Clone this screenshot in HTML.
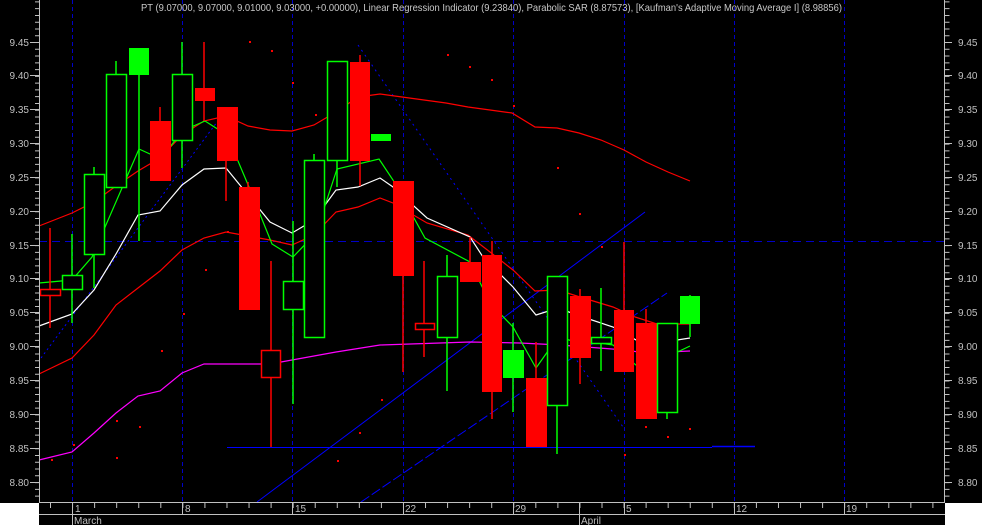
<!DOCTYPE html>
<html><head><meta charset="utf-8"><style>
html,body{margin:0;padding:0;background:#000;}
svg{display:block;font-family:"Liberation Sans",sans-serif;}
</style></head><body>
<svg width="982" height="525" viewBox="0 0 982 525" xmlns="http://www.w3.org/2000/svg">
<rect width="982" height="525" fill="#000"/>
<rect x="0" y="503" width="39" height="22" fill="#fff"/>
<rect x="945" y="503" width="37" height="22" fill="#fff"/>
<!-- grid dashed -->
<g stroke="#0000c8" stroke-width="1" stroke-dasharray="4 3">
<line x1="72.5" y1="0" x2="72.5" y2="502"/><line x1="182.5" y1="0" x2="182.5" y2="502"/>
<line x1="292.5" y1="0" x2="292.5" y2="502"/><line x1="403.5" y1="0" x2="403.5" y2="502"/>
<line x1="513.5" y1="0" x2="513.5" y2="502"/><line x1="624.5" y1="0" x2="624.5" y2="502"/>
<line x1="734.5" y1="0" x2="734.5" y2="502"/><line x1="844.5" y1="0" x2="844.5" y2="502"/>
<line x1="39" y1="241.5" x2="944" y2="241.5" stroke-dasharray="8 5"/>
</g>
<!-- title -->
<text x="141" y="11" fill="#c8c8c8" font-size="10.5" textLength="701" lengthAdjust="spacingAndGlyphs">PT (9.07000, 9.07000, 9.01000, 9.03000, +0.00000), Linear Regression Indicator (9.23840), Parabolic SAR (8.87573), [Kaufman's Adaptive Moving Average I] (8.98856)</text>
<!-- blue lines -->
<g stroke="#0000ff" stroke-width="1" fill="none">
<line x1="257" y1="502" x2="645" y2="212"/>
<line x1="361" y1="502" x2="667" y2="293" stroke-dasharray="10 3"/>
<line x1="358" y1="45" x2="623" y2="427" stroke-dasharray="2 4"/>
<line x1="41" y1="358" x2="226" y2="110" stroke-dasharray="2 3"/>
<line x1="227" y1="447.5" x2="712" y2="447.5"/>
<line x1="712" y1="446.5" x2="755" y2="446.5" stroke-width="1.5"/>
</g>
<!-- magenta -->
<polyline fill="none" stroke="#ff00ff" stroke-width="1.2" points="39,460 72,452 94,433 116,413 138,396 160,391 182,373 204,364 226,364 270,364 292,360 336,352 380,345 440,343 470,342 520,343 560,345 625,350 645,353 690,351"/>
<!-- red bands -->
<g fill="none" stroke="#ff0000" stroke-width="1.2">
<polyline points="39,226 72,213 94,202 116,186 138,171 160,158 182,135 204,121 226,116 248,126 270,130 292,131 314,125 336,112 358,97 380,94 402,97 424,100 446,103 468,107 490,110 512,113 535,127 557,128 579,133 601,140 624,150 646,162 668,172 690,181"/>
<polyline points="39,374 72,358 94,335 116,305 138,288 160,271 182,250 204,238 226,232 248,236 270,240 292,245 314,235 336,212 358,207 380,198 393,203 427,223 468,235 490,252 513,270 535,291 558,290 580,297 613,307 635,317 657,324 690,324"/>
</g>
<polyline fill="none" stroke="#ffffff" stroke-width="1.2" points="39,326 72,314 94,290 116,254 138,215 160,211 182,185 204,169 226,168 248,195 270,222 292,233 314,220 336,190 358,187 380,178 393,187 427,218 470,237 483,257 513,287 536,315 558,308 580,316 613,327 645,345 690,338"/>
<polyline fill="none" stroke="#00ff00" stroke-width="1.2" points="39,283 72,280 92,257 139,149 161,159 182,131 205,121 227,135 249,187 272,244 293,257 316,233 337,169 379,159 393,180 425,238 470,262 490,303 513,327 536,368 558,337 580,343 593,342 613,345 645,373 667,357 690,346"/>
<!-- candles -->
<g stroke-width="1.5">
<g stroke="#ff0000" fill="none">
<line x1="50" y1="228" x2="50" y2="328"/><rect x="40.5" y="289.5" width="20" height="6" fill="#000"/>
<line x1="160" y1="107" x2="160" y2="181"/><line x1="204" y1="42" x2="204" y2="121"/>
<line x1="226" y1="107" x2="226" y2="201"/><line x1="248" y1="182" x2="248" y2="310"/>
<line x1="271" y1="261" x2="271" y2="447"/><rect x="261.5" y="350.5" width="19" height="27" fill="#000"/>
<line x1="360" y1="55" x2="360" y2="186"/><line x1="403" y1="181" x2="403" y2="372"/>
<line x1="424" y1="261" x2="424" y2="357"/><rect x="415.5" y="323.5" width="19" height="6" fill="#000"/>
<line x1="470" y1="237" x2="470" y2="282"/><line x1="492" y1="241" x2="492" y2="419"/>
<line x1="536" y1="342" x2="536" y2="447"/><line x1="580" y1="289" x2="580" y2="384"/>
<line x1="624" y1="242" x2="624" y2="372"/><line x1="646" y1="309" x2="646" y2="419"/>
</g>
<g fill="#ff0000" stroke="none">
<rect x="150" y="121" width="21" height="60"/><rect x="195" y="88" width="20" height="13"/>
<rect x="217" y="107" width="21" height="54"/><rect x="239" y="187" width="21" height="123"/>
<rect x="350" y="62" width="20" height="99"/><rect x="393" y="181" width="21" height="95"/>
<rect x="460" y="262" width="21" height="20"/><rect x="482" y="255" width="20" height="137"/>
<rect x="526" y="378" width="21" height="69"/><rect x="570" y="296" width="21" height="62"/>
<rect x="614" y="310" width="20" height="62"/><rect x="636" y="323" width="21" height="96"/>
</g>
<g stroke="#00ff00" fill="none">
<line x1="72" y1="234" x2="72" y2="323"/><rect x="62.5" y="275.5" width="20" height="14" fill="#000"/>
<line x1="94" y1="167" x2="94" y2="288"/><rect x="84.5" y="174.5" width="20" height="80" fill="#000"/>
<line x1="116" y1="61" x2="116" y2="187"/><rect x="106.5" y="74.5" width="20" height="113" fill="#000"/>
<line x1="139" y1="48" x2="139" y2="241"/>
<line x1="182" y1="42" x2="182" y2="168"/><rect x="172.5" y="74.5" width="20" height="66" fill="#000"/>
<line x1="293" y1="221" x2="293" y2="404"/><rect x="283.5" y="281.5" width="20" height="28" fill="#000"/>
<line x1="314" y1="154" x2="314" y2="337"/><rect x="304.5" y="160.5" width="20" height="177" fill="#000"/>
<line x1="337" y1="61" x2="337" y2="187"/><rect x="327.5" y="61.5" width="20" height="99" fill="#000"/>
<line x1="447" y1="255" x2="447" y2="391"/><rect x="437.5" y="276.5" width="20" height="61" fill="#000"/>
<line x1="513" y1="323" x2="513" y2="412"/>
<line x1="557" y1="276" x2="557" y2="454"/><rect x="547.5" y="276.5" width="20" height="129" fill="#000"/>
<line x1="601" y1="288" x2="601" y2="371"/><rect x="591.5" y="337.5" width="20" height="6" fill="#000"/>
<line x1="667" y1="323" x2="667" y2="419"/><rect x="657.5" y="323.5" width="20" height="89" fill="#000"/>
<line x1="690" y1="295" x2="690" y2="337"/>
</g>
<g fill="#00ff00" stroke="none">
<rect x="129" y="48" width="20" height="27"/><rect x="371" y="134" width="20" height="7"/>
<rect x="503" y="350" width="21" height="28"/><rect x="680" y="296" width="20" height="28"/>
</g>
</g>
<!-- SAR dots -->
<g fill="#ff0000">
<rect x="51" y="459" width="2" height="2"/><rect x="73" y="444" width="2" height="2"/><rect x="116" y="420" width="2" height="2"/>
<rect x="116" y="457" width="2" height="2"/><rect x="139" y="426" width="2" height="2"/><rect x="161" y="350" width="2" height="2"/>
<rect x="183" y="313" width="2" height="2"/><rect x="205" y="269" width="2" height="2"/><rect x="227" y="231" width="2" height="2"/>
<rect x="249" y="41" width="2" height="2"/><rect x="271" y="50" width="2" height="2"/><rect x="292" y="82" width="2" height="2"/>
<rect x="315" y="114" width="2" height="2"/><rect x="337" y="460" width="2" height="2"/><rect x="381" y="399" width="2" height="2"/>
<rect x="359" y="432" width="2" height="2"/><rect x="447" y="54" width="2" height="2"/><rect x="469" y="66" width="2" height="2"/>
<rect x="491" y="79" width="2" height="2"/><rect x="513" y="105" width="2" height="2"/><rect x="557" y="167" width="2" height="2"/>
<rect x="579" y="213" width="2" height="2"/><rect x="601" y="246" width="2" height="2"/><rect x="645" y="426" width="2" height="2"/>
<rect x="667" y="436" width="2" height="2"/><rect x="689" y="428" width="2" height="2"/><rect x="624" y="454" width="2" height="2"/>
</g>
<!-- axes -->
<g stroke="#c0c0c0" stroke-width="1" fill="none">
<line x1="39.5" y1="0" x2="39.5" y2="503"/>
<line x1="944.5" y1="0" x2="944.5" y2="503"/>
<line x1="39" y1="502.5" x2="945" y2="502.5"/>
<line x1="39" y1="514.5" x2="945" y2="514.5"/>
<line x1="37" y1="1.4" x2="37" y2="502" stroke-width="4" stroke-dasharray="1 5.77"/>
<line x1="947" y1="1.4" x2="947" y2="502" stroke-width="5" stroke-dasharray="1 5.77"/>
<line x1="50.5" y1="503" x2="50.5" y2="508" />
<line x1="50" y1="505.5" x2="944" y2="505.5" stroke-width="5" stroke-dasharray="1 21.06"/>
<g stroke-width="1">
<line x1="72.5" y1="503" x2="72.5" y2="525"/><line x1="182.5" y1="503" x2="182.5" y2="514"/>
<line x1="292.5" y1="503" x2="292.5" y2="514"/><line x1="403.5" y1="503" x2="403.5" y2="514"/>
<line x1="513.5" y1="503" x2="513.5" y2="514"/><line x1="579.5" y1="503" x2="579.5" y2="525"/>
<line x1="624.5" y1="503" x2="624.5" y2="514"/><line x1="734.5" y1="503" x2="734.5" y2="514"/>
<line x1="844.5" y1="503" x2="844.5" y2="514"/>
</g>
<g stroke-width="1">
<line x1="30" y1="42.5" x2="39" y2="42.5"/><line x1="30" y1="75.5" x2="39" y2="75.5"/><line x1="30" y1="109.5" x2="39" y2="109.5"/>
<line x1="30" y1="143.5" x2="39" y2="143.5"/><line x1="30" y1="177.5" x2="39" y2="177.5"/><line x1="30" y1="211.5" x2="39" y2="211.5"/>
<line x1="30" y1="245.5" x2="39" y2="245.5"/><line x1="30" y1="278.5" x2="39" y2="278.5"/><line x1="30" y1="312.5" x2="39" y2="312.5"/>
<line x1="30" y1="346.5" x2="39" y2="346.5"/><line x1="30" y1="380.5" x2="39" y2="380.5"/><line x1="30" y1="414.5" x2="39" y2="414.5"/>
<line x1="30" y1="448.5" x2="39" y2="448.5"/><line x1="30" y1="482.5" x2="39" y2="482.5"/>
<line x1="945" y1="42.5" x2="952" y2="42.5"/><line x1="945" y1="75.5" x2="952" y2="75.5"/><line x1="945" y1="109.5" x2="952" y2="109.5"/>
<line x1="945" y1="143.5" x2="952" y2="143.5"/><line x1="945" y1="177.5" x2="952" y2="177.5"/><line x1="945" y1="211.5" x2="952" y2="211.5"/>
<line x1="945" y1="245.5" x2="952" y2="245.5"/><line x1="945" y1="278.5" x2="952" y2="278.5"/><line x1="945" y1="312.5" x2="952" y2="312.5"/>
<line x1="945" y1="346.5" x2="952" y2="346.5"/><line x1="945" y1="380.5" x2="952" y2="380.5"/><line x1="945" y1="414.5" x2="952" y2="414.5"/>
<line x1="945" y1="448.5" x2="952" y2="448.5"/><line x1="945" y1="482.5" x2="952" y2="482.5"/>
</g>
</g>
<g fill="#c0c0c0" font-size="10">
<g text-anchor="end">
<text x="29" y="46">9.45</text><text x="29" y="79">9.40</text><text x="29" y="113">9.35</text><text x="29" y="147">9.30</text>
<text x="29" y="181">9.25</text><text x="29" y="215">9.20</text><text x="29" y="249">9.15</text><text x="29" y="282">9.10</text>
<text x="29" y="316">9.05</text><text x="29" y="350">9.00</text><text x="29" y="384">8.95</text><text x="29" y="418">8.90</text>
<text x="29" y="452">8.85</text><text x="29" y="486">8.80</text>
</g>
<g>
<text x="958" y="46">9.45</text><text x="958" y="79">9.40</text><text x="958" y="113">9.35</text><text x="958" y="147">9.30</text>
<text x="958" y="181">9.25</text><text x="958" y="215">9.20</text><text x="958" y="249">9.15</text><text x="958" y="282">9.10</text>
<text x="958" y="316">9.05</text><text x="958" y="350">9.00</text><text x="958" y="384">8.95</text><text x="958" y="418">8.90</text>
<text x="958" y="452">8.85</text><text x="958" y="486">8.80</text>
</g>
<text x="75" y="512">1</text><text x="185" y="512">8</text><text x="295" y="512">15</text><text x="405" y="512">22</text>
<text x="515" y="512">29</text><text x="626" y="512">5</text><text x="736" y="512">12</text><text x="846" y="512">19</text>
<text x="74" y="524">March</text><text x="581" y="524">April</text>
</g>
</svg>
</body></html>
